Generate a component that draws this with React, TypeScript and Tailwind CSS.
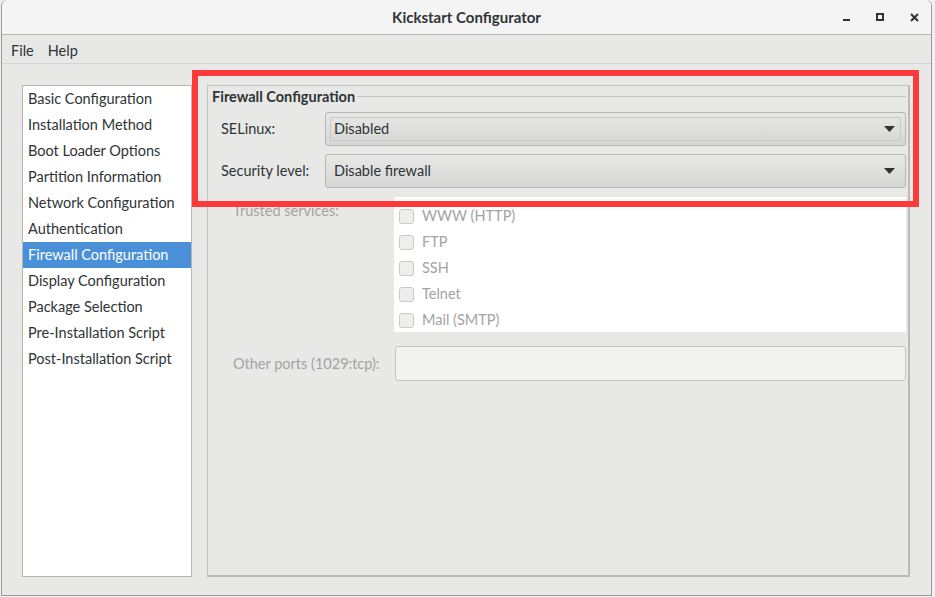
import React from "react";

const items = [
  "Basic Configuration",
  "Installation Method",
  "Boot Loader Options",
  "Partition Information",
  "Network Configuration",
  "Authentication",
  "Firewall Configuration",
  "Display Configuration",
  "Package Selection",
  "Pre-Installation Script",
  "Post-Installation Script",
];

const services = ["WWW (HTTP)", "FTP", "SSH", "Telnet", "Mail (SMTP)"];

function Arrow() {
  return (
    <svg width="11" height="6" viewBox="0 0 11 6" className="shrink-0">
      <path d="M0 0 H11 L5.5 6 Z" fill="#2e3436" />
    </svg>
  );
}

export default function App() {
  return (
    <div
      className="relative w-[935px] h-[597px] overflow-hidden bg-[#efefef]"
      style={{ fontFamily: "Lato, 'Noto Sans', sans-serif" }}
    >
      <div className="absolute left-[1px] top-0 w-[931px] h-[596px] flex flex-col bg-[#e8e8e7] rounded-t-[6px] border-r border-b border-l border-[#9a9a98] text-[#2e3436]">
        {/* title bar */}
        <div className="relative h-[35px] shrink-0 flex items-center justify-center bg-[#f4f4f4] border-b border-[#b8b8b5] rounded-t-[6px]">
          <span className="text-[15px] font-bold text-[#2e3436]">Kickstart Configurator</span>
          <div className="absolute right-0 top-0 h-[35px] flex items-center">
            <div className="w-[34px] h-[35px] flex items-center justify-center">
              <div className="w-[7px] h-[2px] bg-[#2e3436] mt-[5px]" />
            </div>
            <div className="w-[34px] h-[35px] flex items-center justify-center">
              <div className="w-[8px] h-[8px] border-2 border-[#2e3436] mb-[1px]" />
            </div>
            <div className="w-[34px] h-[35px] flex items-center justify-center">
              <svg width="9" height="9" viewBox="0 0 9 9" className="mb-[1px]">
                <path d="M1 1 L8 8 M8 1 L1 8" stroke="#2e3436" strokeWidth="2" />
              </svg>
            </div>
          </div>
        </div>
        {/* menu bar */}
        <div className="h-[29px] shrink-0 flex items-center gap-[14px] px-[9px] pt-[3px] text-[14.5px] border-b border-[#d5d5d2]">
          <span>File</span>
          <span>Help</span>
        </div>
        {/* content */}
        <div className="flex-1 flex pl-[20px] pr-[21px] pt-[21px] pb-[18px] gap-[15px]">
          <div className="w-[170px] shrink-0 bg-white border border-[#b6b6b3]">
            {items.map((it) => (
              <div
                key={it}
                className={
                  "h-[26px] flex items-center pl-[5px] text-[14.5px] whitespace-nowrap " +
                  (it === "Firewall Configuration" ? "bg-[#4a90d9] text-white" : "text-[#2e3436]")
                }
              >
                {it}
              </div>
            ))}
          </div>
          <div className="flex-1 border-t border-l border-r-2 border-b-2 border-[#bababa] border-t-[#c4c4c1] border-l-[#c4c4c1] flex flex-col">
            {/* fieldset label */}
            <div className="h-[21px] flex items-center pl-[4px] pr-[2px]">
              <span className="text-[14.5px] font-bold text-[#2e3436] pr-[2px]">Firewall Configuration</span>
              <div className="flex-1 h-px bg-[#c4c4c1]" />
            </div>
            <div className="flex flex-col pl-[13px] pr-[2px] pt-[5px] gap-[8px]">
              <div className="flex items-center">
                <span className="w-[104px] text-[14.5px]">SELinux:</span>
                <div className="flex-1 h-[34px] rounded-[3px] border border-[#b6b6b3] bg-gradient-to-b from-[#e8e8e7] to-[#d6d6d4] p-[4px]">
                  <div className="h-full rounded-[2px] border border-[#c9c9c6] flex items-center pl-[3px] pr-[5px] justify-between">
                    <span className="text-[14.5px]">Disabled</span>
                    <Arrow />
                  </div>
                </div>
              </div>
              <div className="flex items-center">
                <span className="w-[104px] text-[14.5px]">Security level:</span>
                <div className="flex-1 h-[34px] rounded-[3px] border border-[#b6b6b3] bg-gradient-to-b from-[#e8e8e7] to-[#d6d6d4] flex items-center pl-[8px] pr-[10px] justify-between">
                  <span className="text-[14.5px]">Disable firewall</span>
                  <Arrow />
                </div>
              </div>
            </div>
            <div className="flex pl-[25px] pr-[2px] pt-[9px]">
              <span className="w-[161px] text-[14.5px] text-[#a3a3a3] leading-[20px] pt-[4px]">Trusted services:</span>
              <div className="flex-1 h-[135px] bg-white pt-[6px]">
                {services.map((s) => (
                  <div key={s} className="h-[26px] flex items-center pl-[5px] gap-[8px]">
                    <div className="w-[15px] h-[15px] rounded-[3px] border border-[#c9c9c6] bg-[#eeeeec]" />
                    <span className="text-[14.5px] text-[#a3a3a3]">{s}</span>
                  </div>
                ))}
              </div>
            </div>
            <div className="flex items-center pl-[25px] pr-[2px] pt-[14px]">
              <span className="w-[162px] text-[14.5px] text-[#a3a3a3]">Other ports (1029:tcp):</span>
              <div className="flex-1 h-[35px] rounded-[3px] border border-[#c4c4c0] bg-[#f2f2f0]" />
            </div>
          </div>
        </div>
      </div>
      {/* annotation */}
      <div className="absolute left-[192px] top-[70px] w-[727px] h-[137px] border-[6px] border-[#fc3a3a]" />
    </div>
  );
}
